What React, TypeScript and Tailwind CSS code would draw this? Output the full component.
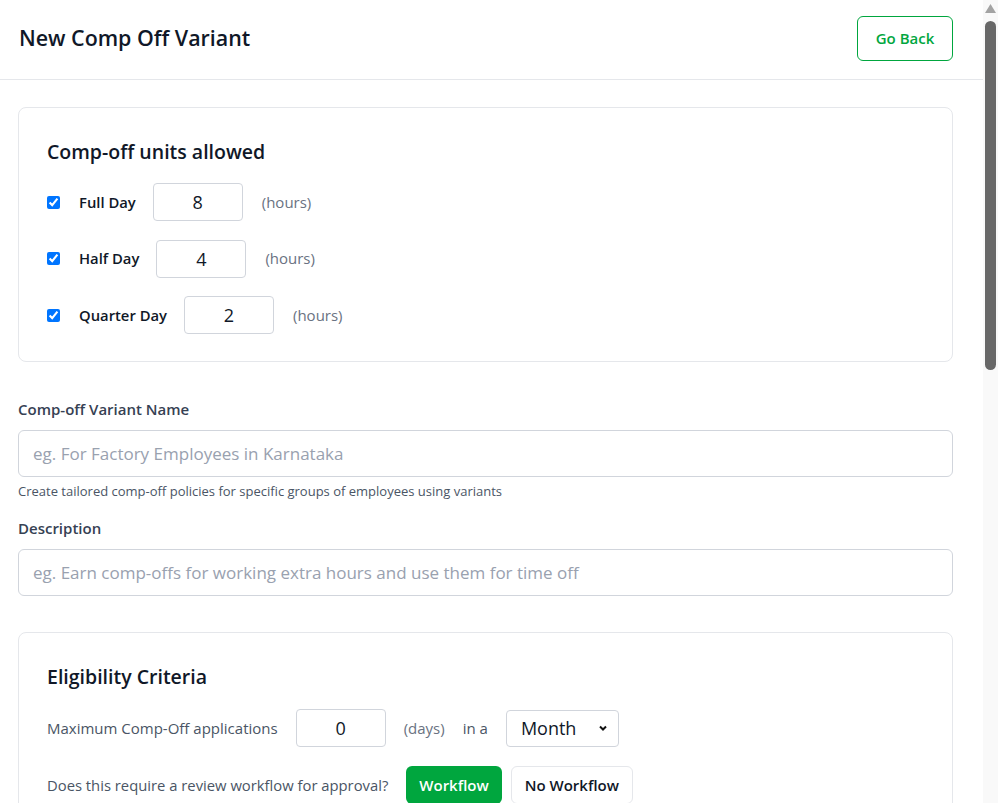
import { useState } from "react";

const font = { fontFamily: '"Open Sans", "Noto Sans", sans-serif' };

const units = [
  { label: "Full Day", hours: "8" },
  { label: "Half Day", hours: "4" },
  { label: "Quarter Day", hours: "2" },
];

export default function App() {
  const [workflow, setWorkflow] = useState(true);

  return (
    <div className="flex h-screen overflow-hidden bg-white text-gray-900" style={font}>
      <div className="flex-1 overflow-y-auto [scrollbar-width:none]">
        {/* Header */}
        <div className="flex h-[80px] items-center justify-between border-b border-gray-200 pb-[3px] pl-[19px] pr-[30px]">
          <h1 className="text-[21.4px] leading-[30px] font-semibold text-gray-900">New Comp Off Variant</h1>
          <button className="h-[45px] w-[96px] rounded-md border border-green-600 text-[15px] font-semibold text-green-600">
            Go Back
          </button>
        </div>

        <div className="flex flex-col pl-[18px] pr-[30px] pt-[27px] pb-10">
          {/* Units card */}
          <div className="rounded-lg border border-gray-200 px-[28px] pt-[30px] pb-[27px]">
            <h2 className="mb-[17px] text-[19.5px] leading-[28px] font-semibold text-gray-900">Comp-off units allowed</h2>
            <div className="flex flex-col gap-[18.5px]">
              {units.map((u) => (
                <div key={u.label} className="flex items-center">
                  <input type="checkbox" defaultChecked className="m-0 h-[13px] w-[13px] accent-[#0075ff]" />
                  <span className="ml-[19px] mr-[17px] text-[14.8px] font-semibold text-gray-900">{u.label}</span>
                  <input
                    defaultValue={u.hours}
                    className="h-[38px] w-[90px] rounded border border-gray-300 text-center text-[18px] text-gray-900 outline-none"
                  />
                  <span className="ml-[19px] text-[15px] text-gray-500">(hours)</span>
                </div>
              ))}
            </div>
          </div>

          {/* Name */}
          <label className="mt-[37px] mb-[11px] text-[15px] leading-[20px] font-semibold text-gray-700">
            Comp-off Variant Name
          </label>
          <input
            placeholder="eg. For Factory Employees in Karnataka"
            className="h-[47px] w-full rounded-md border border-gray-300 px-[14px] text-[17px] outline-none placeholder:text-gray-400"
          />
          <p className="mt-[6px] text-[13px] leading-[16px] text-gray-600">
            Create tailored comp-off policies for specific groups of employees using variants
          </p>

          <label className="mt-[19px] mb-[11px] text-[15px] leading-[20px] font-semibold text-gray-700">Description</label>
          <input
            placeholder="eg. Earn comp-offs for working extra hours and use them for time off"
            className="h-[47px] w-full rounded-md border border-gray-300 px-[14px] text-[17px] outline-none placeholder:text-gray-400"
          />

          {/* Eligibility */}
          <div className="mt-[36px] rounded-lg border border-gray-200 px-[28px] pt-[30px] pb-[28px]">
            <h2 className="mb-[18px] text-[19.5px] leading-[28px] font-semibold text-gray-900">Eligibility Criteria</h2>
            <div className="flex items-center">
              <span className="text-[15px] text-gray-600">Maximum Comp-Off applications</span>
              <input
                defaultValue="0"
                className="ml-[18px] h-[38px] w-[90px] rounded border border-gray-300 text-center text-[18px] outline-none"
              />
              <span className="ml-[18px] text-[15px] text-gray-500">(days)</span>
              <span className="ml-[18px] text-[15px] text-gray-600">in a</span>
              <div className="relative ml-[18px]">
                <select className="h-[37px] w-[113px] appearance-none rounded border border-gray-300 bg-white pl-[14px] text-[18px] text-gray-900 outline-none">
                  <option>Month</option>
                  <option>Week</option>
                  <option>Year</option>
                </select>
                <svg
                  className="pointer-events-none absolute right-[11px] top-1/2 h-[10px] w-[10px] -translate-y-1/2"
                  viewBox="0 0 10 10"
                  fill="none"
                  stroke="#111"
                  strokeWidth="2"
                >
                  <path d="M2 3.5 5 6.5 8 3.5" />
                </svg>
              </div>
            </div>
            <div className="mt-[19px] flex items-center">
              <span className="text-[14.8px] text-gray-600">Does this require a review workflow for approval?</span>
              <button
                onClick={() => setWorkflow(true)}
                className={
                  workflow
                    ? "ml-[18px] h-[38px] rounded-md bg-green-600 px-[13px] text-[15px] font-semibold text-white"
                    : "ml-[18px] h-[38px] rounded-md border border-gray-200 px-[13px] text-[15px] font-semibold text-gray-900"
                }
              >
                Workflow
              </button>
              <button
                onClick={() => setWorkflow(false)}
                className={
                  !workflow
                    ? "ml-[9px] h-[38px] rounded-md bg-green-600 px-[13px] text-[15px] font-semibold text-white"
                    : "ml-[9px] h-[38px] rounded-md border border-gray-200 px-[13px] text-[15px] font-semibold text-gray-900"
                }
              >
                No Workflow
              </button>
            </div>
          </div>
        </div>
      </div>

      {/* Scrollbar track */}
      <div className="flex w-[15px] shrink-0 flex-col items-center bg-[#f9f9f9]">
        <svg className="mt-[4px] h-[9px] w-[11px]" viewBox="0 0 11 9">
          <path d="M5.5 0 11 9H0z" fill="#a3a3a3" />
        </svg>
        <div className="mt-[8px] h-[349px] w-[11px] rounded-full bg-[#686868]" />
      </div>
    </div>
  );
}
